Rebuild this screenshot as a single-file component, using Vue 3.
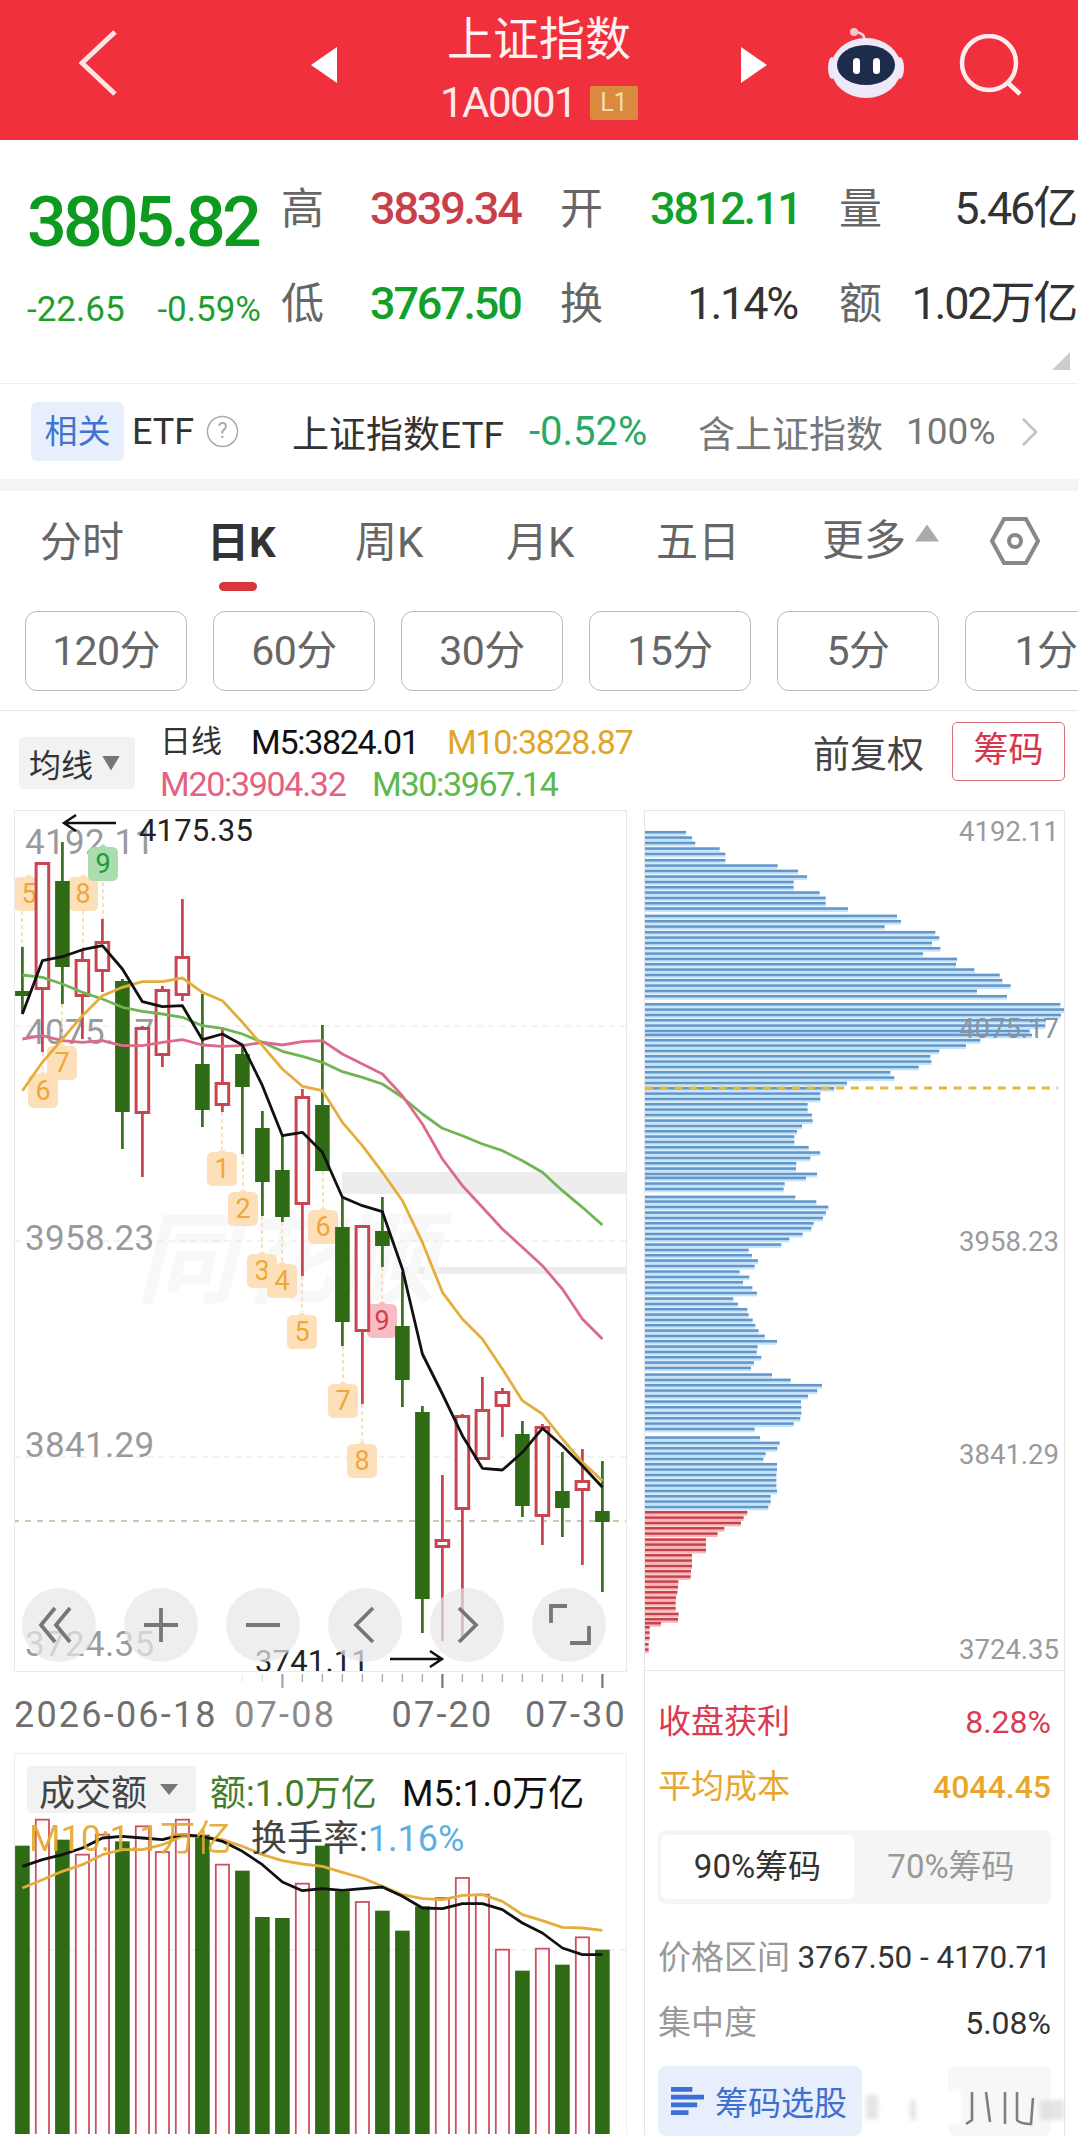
<script setup>
const toX = (i) => 22.4 + 20 * i
const poly = (ys) => ys.map((y, i) => `${toX(i)},${(800 + y / 3).toFixed(1)}`).join(' ')
const volPoly = (ys) => ys.map((y, i) => `${toX(i)},${(1740 + y / 3).toFixed(1)}`).join(' ')

const candles = [
  ['g', 948, 1015, 992, 997], ['r', 863, 1053, 863, 991], ['g', 843, 1005, 882, 968],
  ['r', 950, 1040, 960, 998], ['r', 920, 993, 942, 973], ['g', 980, 1150, 982, 1113],
  ['r', 1027, 1178, 1028, 1115], ['r', 987, 1068, 990, 1057], ['r', 900, 1002, 957, 997],
  ['g', 995, 1128, 1065, 1111], ['r', 1030, 1113, 1083, 1107], ['g', 1047, 1155, 1055, 1088],
  ['g', 1112, 1217, 1129, 1183], ['g', 1137, 1223, 1171, 1218], ['r', 1090, 1277, 1097, 1206],
  ['g', 1026, 1172, 1106, 1172], ['g', 1197, 1347, 1228, 1323], ['r', 1226, 1405, 1226, 1333],
  ['g', 1198, 1268, 1232, 1247], ['g', 1273, 1408, 1327, 1381], ['g', 1407, 1634, 1413, 1600],
  ['r', 1476, 1642, 1540, 1549], ['r', 1415, 1638, 1416, 1511], ['r', 1378, 1460, 1410, 1461],
  ['r', 1389, 1438, 1392, 1408], ['g', 1422, 1518, 1435, 1507], ['r', 1425, 1546, 1427, 1518],
  ['g', 1453, 1538, 1492, 1509], ['r', 1450, 1566, 1481, 1492], ['g', 1462, 1593, 1512, 1523]
].map((c, i) => ({ t: c[0], x: toX(i), wt: c[1], wb: c[2], bt: c[3], bb: c[4] }))

const m5 = poly([645,485,473,452,440,510,608,623,620,722,705,738,860,1010,1000,1060,1195,1220,1238,1410,1665,1785,1910,2008,2013,1960,1888,1940,2000,2065])
const m10 = poly([875,790,720,650,590,565,548,548,537,580,605,670,740,810,862,875,970,1040,1120,1205,1330,1480,1560,1620,1710,1805,1845,1920,1990,2045])
const m20 = poly([720,710,725,730,725,740,740,730,722,738,742,740,730,738,728,725,765,795,825,890,975,1080,1160,1225,1290,1345,1400,1470,1560,1620])
const m30 = poly([528,535,555,580,600,625,637,645,655,680,688,705,730,757,772,790,818,835,855,895,945,988,1010,1035,1055,1085,1120,1175,1225,1278])

const axisLabels = [
  ['4192.11', 855], ['4075.17', 1045], ['3958.23', 1251], ['3841.29', 1458]
]
const grids = [1027, 1242, 1458]

const badges = [
  ['5', 29, 875, 'o'], ['8', 83, 875, 'o'], ['9', 103, 845, 'g'], ['7', 62, 1044, 'o'], ['6', 43, 1072, 'o'],
  ['1', 222, 1150, 'o'], ['2', 243, 1190, 'o'], ['3', 262, 1252, 'o'], ['4', 282, 1262, 'o'], ['6', 323, 1208, 'o'],
  ['5', 302, 1313, 'o'], ['7', 343, 1382, 'o'], ['8', 362, 1442, 'o'], ['9', 382, 1302, 'r']
].map((b) => ({ n: b[0], x: b[1], y: b[2], k: b[3] }))

const links = [
  [22, 912, 948], [43, 1053, 1072], [62, 1005, 1045], [83, 912, 950], [103, 883, 920],
  [222, 1113, 1150], [243, 1155, 1190], [262, 1217, 1252], [282, 1223, 1262], [302, 1277, 1313],
  [323, 1172, 1208], [343, 1347, 1382], [362, 1405, 1442], [382, 1268, 1302]
]

const ticks = Array.from({ length: 19 }, (_, i) => 11 + i).map((i) => ({
  x: toX(i), major: i === 13 || i === 21 || i === 29, o: i < 14 ? 0.25 + (i - 11) * 0.2 : 1
}))

const volTops = [323,245,305,350,290,310,265,342,245,290,380,398,537,540,437,323,460,492,518,578,505,480,420,470,635,698,632,680,598,635]
const volType = ['g','r','g','r','r','g','r','r','r','g','r','g','g','g','r','g','g','r','g','g','g','r','r','r','r','g','r','g','r','g']
const vols = volTops.map((y, i) => ({ x: toX(i), y: 1740 + y / 3, t: volType[i] }))
const vm5 = volPoly([385,365,350,330,300,295,300,305,290,295,310,340,380,432,458,452,457,452,447,475,510,512,497,497,515,555,585,630,650,650])
const vm10 = volPoly([450,425,400,380,350,335,335,320,295,295,305,325,350,368,378,385,403,420,445,470,482,485,472,470,490,530,548,568,570,577])

const z6 = [[100,167],[116,185],[132,195],[149,268],[165,285],[184,285],[200,442],[216,503],[233,530],[249,490],[265,490],[281,568],[297,586],[313,586],[329,653],[351,800],[367,812],[383,763],[400,915],[416,927],[432,905],[448,930],[464,878],[480,980],[496,977],[512,1032],[528,1108],[544,1116],[560,1141],[576,1040],[592,1130],[616,1290],[632,1302],[648,1292],[664,1247],[680,1245],[696,1198],[708,1205],[724,1050],[740,1007],[756,927],[772,900],[788,903],[804,865],[820,780],[836,792],[852,650],[868,612],[884,570],[900,570],[916,532],[932,532],[948,545],[965,547],[981,515],[997,500],[1013,492],[1029,492],[1045,535],[1061,570],[1077,540],[1093,498],[1109,497],[1125,560],[1137,527],[1154,463],[1170,460],[1194,495],[1208,558],[1224,594],[1241,587],[1257,578],[1273,550],[1288,543],[1305,517],[1320,477]]
const z7 = [[17,453],[33,355],[49,365],[65,383],[81,373],[98,328],[114,357],[130,338],[146,366],[162,380],[179,309],[195,323],[211,351],[227,355],[243,367],[259,375],[275,385],[291,403],[307,440],[323,382],[339,379],[355,393],[371,371],[387,362],[407,425],[423,481],[439,575],[455,561],[471,533],[488,512],[505,513],[522,513],[538,510],[554,490],[570,373],[596,389],[612,448],[628,441],[644,406],[660,399],[676,440],[692,440],[708,438],[724,438],[740,438],[756,440],[772,421],[788,421],[804,414]]
const z7r = [[820,351],[836,340],[852,332],[868,282],[884,262],[902,227],[917,227],[933,227],[949,185],[965,185],[981,185],[997,182],[1013,181],[1028,144],[1044,143],[1060,141],[1076,137],[1092,136],[1108,136],[1125,145],[1141,143],[1153,92],[1165,58],[1181,58],[1197,58],[1216,55],[1232,55]]
const blueBars = [
  ...z6.map(([y, e]) => ({ y: 800 + y / 3, w: (e - 44) / 3 })),
  ...z7.map(([y, e]) => ({ y: 1240 + y / 3, w: (e - 44) / 3 }))
]
const redBars = z7r.map(([y, e]) => ({ y: 1240 + y / 3, w: (e - 44) / 3 }))
const chipLabels = [['4192.11', 842], ['3958.23', 1252], ['3841.29', 1465], ['3724.35', 1660]]
const tabs = ['分时', '日K', '周K', '月K', '五日']
const periods = ['120分', '60分', '30分', '15分', '5分', '1分']
</script>

<template>
  <div class="page">
    <header class="topbar">
      <svg class="ic-back" viewBox="0 0 38 66"><path d="M36 2 L3 33 L36 64" /></svg>
      <svg class="ic-tri ic-left" viewBox="0 0 26 36"><path d="M26 0 V36 L0 18 Z" /></svg>
      <div class="title-box">
        <div class="title">上证指数</div>
        <div class="subline"><span class="code">1A0001</span><span class="lv">L1</span></div>
      </div>
      <svg class="ic-tri ic-right" viewBox="0 0 26 36"><path d="M0 0 V36 L26 18 Z" /></svg>
      <svg class="ic-bot" viewBox="0 0 76 72">
        <path d="M36 12 C37 7 30 5 27 5" fill="none" stroke="#f6d5dd" stroke-width="2.5" />
        <circle cx="26" cy="5" r="4" fill="#f8c7c9" />
        <ellipse cx="4" cy="41" rx="4" ry="11" fill="#f3e5f3" />
        <ellipse cx="72" cy="41" rx="4" ry="11" fill="#f3e5f3" />
        <ellipse cx="38" cy="41" rx="35" ry="30" fill="#eee9f8" />
        <ellipse cx="38" cy="38" rx="29" ry="20" fill="#1d2c4d" />
        <rect x="25" y="31" width="7" height="16" rx="3.5" fill="#fff" />
        <rect x="45" y="31" width="7" height="16" rx="3.5" fill="#fff" />
      </svg>
      <svg class="ic-search" viewBox="0 0 64 62">
        <circle cx="30" cy="29" r="27" />
        <path d="M49 49 L61 60" />
      </svg>
    </header>

    <section class="quote">
      <div class="q-left">
        <div class="price">3805.82</div>
        <div class="change"><span>-22.65</span><span>-0.59%</span></div>
      </div>
      <div class="q-grid">
        <span class="lab">高</span><span class="val red">3839.34</span>
        <span class="lab">开</span><span class="val green end4">3812.11</span>
        <span class="lab">量</span><span class="val dark end">5.46亿</span>
        <span class="lab">低</span><span class="val green">3767.50</span>
        <span class="lab">换</span><span class="val dark end4">1.14%</span>
        <span class="lab">额</span><span class="val dark end">1.02万亿</span>
      </div>
      <i class="fold"></i>
    </section>

    <section class="etf">
      <span class="etf-tag">相关</span>
      <span class="etf-word">ETF</span>
      <svg class="ic-help" viewBox="0 0 34 34">
        <circle cx="17" cy="17" r="15.5" />
        <text x="17" y="24" text-anchor="middle">?</text>
      </svg>
      <span class="etf-name">上证指数ETF</span>
      <span class="etf-pct">-0.52%</span>
      <span class="etf-hold">含上证指数</span>
      <span class="etf-hold">100%</span>
      <svg class="ic-more" viewBox="0 0 18 32"><path d="M2 2 L16 16 L2 30" /></svg>
    </section>
    <div class="band"></div>

    <nav class="tabs">
      <span v-for="(t, i) in tabs" :key="t" class="tab" :class="{ on: i === 1 }">{{ t }}</span>
      <span class="tab more">更多<i class="more-tri"></i></span>
      <svg class="ic-hex" viewBox="0 0 50 48">
        <path d="M14 2 H36 L48 24 L36 46 H14 L2 24 Z" />
        <circle cx="25" cy="24" r="6" />
      </svg>
    </nav>

    <div class="periods">
      <span v-for="p in periods" :key="p" class="period">{{ p }}</span>
    </div>

    <div class="ma">
      <span class="ma-btn">均线<i class="dn"></i></span>
      <div class="ma-text">
        <div class="ma-line">
          <span class="ma-day">日线</span><span class="m-a">M5:3824.01</span><span class="m-b">M10:3828.87</span>
        </div>
        <div class="ma-line">
          <span class="m-c">M20:3904.32</span><span class="m-d">M30:3967.14</span>
        </div>
      </div>
      <span class="adjust">前复权</span>
      <span class="chip-btn">筹码</span>
    </div>

    <div class="charts">
      <div class="left-col">
        <div class="kbox">
          <svg class="ksvg" viewBox="15 812 611 860">
            <rect x="342" y="1173" width="285" height="22" fill="#ededed" />
            <rect x="404" y="1268" width="223" height="7" fill="#ededed" />
            <text x="136" y="1296" class="wm">同花顺</text>
            <line v-for="g in grids" :key="g" x1="15" x2="626" :y1="g" :y2="g" class="grid" />
            <text v-for="a in axisLabels" :key="a[0]" x="25" :y="a[1]" class="axis">{{ a[0] }}</text>
            <text x="25" y="1657" class="axis">3724.35</text>
            <line x1="13" x2="627" y1="1522" y2="1522" class="now" />
            <line v-for="l in links" :key="l[0]" :x1="l[0]" :x2="l[0]" :y1="l[1]" :y2="l[2]" class="link" />
            <g v-for="(b, i) in badges" :key="i" :class="'bd-' + b.k">
              <path :d="`M${b.x - 15} ${b.y + 9} q0 -6 6 -6 h5 l4 -3 l4 3 h5 q6 0 6 6 v22 q0 6 -6 6 h-18 q-6 0 -6 -6 z`" />
              <text :x="b.x" :y="b.y + 29" text-anchor="middle">{{ b.n }}</text>
            </g>
            <g v-for="(c, i) in candles" :key="i">
              <template v-if="c.t === 'g'">
                <line :x1="c.x" :x2="c.x" :y1="c.wt" :y2="c.wb" class="wick-g" />
                <rect :x="c.x - 7.3" :y="c.bt" width="14.6" :height="c.bb - c.bt" fill="#2f6a14" />
              </template>
              <template v-else>
                <line :x1="c.x" :x2="c.x" :y1="c.wt" :y2="c.bt" class="wick-r" />
                <line :x1="c.x" :x2="c.x" :y1="c.bb" :y2="c.wb" class="wick-r" />
                <rect :x="c.x - 6.3" :y="c.bt + 1.5" width="12.6" :height="c.bb - c.bt - 3" class="body-r" />
              </template>
            </g>
            <polyline :points="m30" class="l" stroke="#6fb552" />
            <polyline :points="m20" class="l" stroke="#dd6a8a" />
            <polyline :points="m10" class="l" stroke="#e5ae3c" />
            <polyline :points="m5" class="l" stroke="#111" />
            <text x="139" y="842" class="note">4175.35</text>
            <path d="M116 824 H65 M76 816 L64 824 L76 832" class="arrow" />
            <text x="255" y="1673" class="note">3741.11</text>
            <path d="M390 1660 H441 M430 1652 L442 1660 L430 1668" class="arrow" />
          </svg>
          <div class="zoombar">
            <span class="zb"><svg viewBox="0 0 74 74"><path d="M33 20 L19 37 L33 54 M48 20 L34 37 L48 54" /></svg></span>
            <span class="zb"><svg viewBox="0 0 74 74"><path d="M20 37 H54 M37 20 V54" /></svg></span>
            <span class="zb"><svg viewBox="0 0 74 74"><path d="M20 37 H54" /></svg></span>
            <span class="zb"><svg viewBox="0 0 74 74"><path d="M45 20 L28 37 L45 54" /></svg></span>
            <span class="zb"><svg viewBox="0 0 74 74"><path d="M29 20 L46 37 L29 54" /></svg></span>
            <span class="zb"><svg viewBox="0 0 74 74"><path d="M35 18 H19 V35 M57 38 V55 H38" /></svg></span>
          </div>
        </div>
        <div class="timeaxis">
          <svg class="ticks" viewBox="14 1673 613 20">
            <line v-for="t in ticks" :key="t.x" :x1="t.x" :x2="t.x" y1="1675" :y2="t.major ? 1689 : 1683"
              :stroke-opacity="t.o" :class="t.major ? 'tk-major' : 'tk'" />
          </svg>
          <div class="dates">
            <span class="d1">2026-06-18</span><span class="d2">07-08</span><span class="d3">07-20</span><span>07-30</span>
          </div>
        </div>
        <div class="volbox">
          <svg class="vsvg" viewBox="15 1756 611 380">
            <line x1="15" x2="626" y1="1952" y2="1952" class="grid" />
            <g v-for="(v, i) in vols" :key="i">
              <rect v-if="v.t === 'g'" :x="v.x - 7.3" :y="v.y" width="14.6" :height="2136 - v.y + 4" fill="#2f6a14" />
              <rect v-else :x="v.x - 6.6" :y="v.y" width="13.2" :height="2136 - v.y + 4" class="vol-r" />
            </g>
            <polyline :points="vm10" class="l" stroke="#e5ae3c" />
            <polyline :points="vm5" class="l" stroke="#111" />
          </svg>
          <div class="vol-legend">
            <div class="vl1">
              <span class="vol-btn">成交额<i class="dn2"></i></span>
              <span class="v-g">额:1.0万亿</span>
              <span class="v-k">M5:1.0万亿</span>
            </div>
            <div class="vl2">
              <span class="v-o">M10:1.1万亿</span>
              <span class="v-t">换手率:<b>1.16%</b></span>
            </div>
          </div>
        </div>
      </div>

      <div class="right-col">
        <div class="chipbox">
          <svg class="ksvg" viewBox="645 812 419 859">
            <g v-for="(b, i) in blueBars" :key="'b' + i">
              <rect x="645" :y="b.y + 1" :width="b.w" height="2.4" fill="#c3e5fb" />
              <rect x="645" :y="b.y - 1.4" :width="b.w" height="2.6" fill="#6496ca" />
            </g>
            <g v-for="(b, i) in redBars" :key="'r' + i">
              <rect x="645" :y="b.y + 1" :width="b.w" height="2.4" fill="#fbb6b6" />
              <rect x="645" :y="b.y - 1.4" :width="b.w" height="2.6" fill="#c8424e" />
            </g>
            <line x1="645" x2="1058" y1="1089" y2="1089" class="avg" />
            <text x="1059" y="1039" text-anchor="end" class="chip-axis faint">4075.17</text>
            <text v-for="c in chipLabels" :key="c[0]" x="1059" :y="c[1]" text-anchor="end" class="chip-axis">{{ c[0] }}</text>
          </svg>
        </div>
        <div class="info">
          <div class="row rose"><span>收盘获利</span><span class="n">8.28%</span></div>
          <div class="row amber"><span>平均成本</span><span class="n w5">4044.45</span></div>
          <div class="seg">
            <span class="seg-on">90%筹码</span>
            <span class="seg-off">70%筹码</span>
          </div>
          <div class="row r3"><span class="mute">价格区间</span><span class="n dk">3767.50 - 4170.71</span></div>
          <div class="row"><span class="mute">集中度</span><span class="n dk">5.08%</span></div>
          <div class="bottom-btns">
            <span class="pick">
              <svg viewBox="0 0 34 30"><path d="M0 3 H22 M0 11 H34 M0 19 H27 M0 27 H18" /></svg>
              筹码选股
            </span>
            <span class="pick2"></span>
          </div>
        </div>
      </div>
    </div>

    <svg class="stamp" viewBox="860 2060 218 76">
      <defs><filter id="soft"><feGaussianBlur stdDeviation="2" /></filter></defs>
      <g filter="url(#soft)" fill="#fff">
        <rect x="864" y="2090" width="24" height="34" rx="8" />
        <rect x="908" y="2090" width="24" height="34" />
        <rect x="935" y="2090" width="26" height="34" />
      </g>
      <g filter="url(#soft)" fill="#d9d9d9" opacity=".7">
        <rect x="866" y="2095" width="12" height="24" />
        <rect x="910" y="2100" width="6" height="20" />
        <rect x="1040" y="2100" width="24" height="20" />
      </g>
      <g class="stamp-ink">
        <path d="M972 2092 V2120 L966 2124" />
        <path d="M986 2092 L990 2122" />
        <path d="M1005 2092 V2124" />
        <path d="M1017 2092 V2120 Q1020 2124 1031 2124 L1033 2098" />
      </g>
    </svg>
  </div>
</template>

<style>
html, body { margin: 0; background: #fff; }
</style>

<style scoped>
.page {
  position: relative;
  width: 1078px;
  height: 2136px;
  overflow: hidden;
  background: #fff;
  font-family: Roboto, "Noto Sans CJK SC", sans-serif;
  color: #333;
}
i { display: block; font-style: normal; }

.topbar { display: flex; height: 140px; background: #f0303d; align-items: flex-start; }
.ic-back { width: 38px; height: 66px; margin: 30px 0 0 79px; flex: none; }
.ic-back path { fill: none; stroke: #ffe3e3; stroke-width: 5; }
.ic-tri { width: 26px; height: 36px; margin-top: 47px; flex: none; }
.ic-tri path { fill: #fff; }
.ic-left { margin-left: 194px; }
.title-box { width: 404px; flex: none; text-align: center; color: #fff; padding-top: 9px; }
.title { font-size: 46px; line-height: 52px; font-family: "Noto Sans CJK SC", sans-serif; color: #fff2f2; }
.subline { display: flex; justify-content: center; align-items: center; margin-top: 25px; height: 34px; gap: 14px; }
.code { font-size: 42px; letter-spacing: -1.6px; color: #ffeaea; line-height: 34px; }
.lv { width: 48px; height: 34px; line-height: 34px; background: #d98a3e; color: #f9dab1; font-size: 25px; border-radius: 2px; }
.ic-bot { width: 76px; height: 72px; margin: 27px 0 0 61px; flex: none; }
.ic-search { width: 64px; height: 62px; margin: 34px 0 0 55px; flex: none; }
.ic-search circle, .ic-search path { fill: none; stroke: #ffecec; stroke-width: 4.5; }

.quote { position: relative; display: flex; height: 244px; padding-left: 27px; box-sizing: border-box; border-bottom: 1px solid #eee; }
.q-left { width: 254px; flex: none; }
.price { margin-top: 47px; font-size: 70px; line-height: 70px; font-weight: 500; letter-spacing: -3.9px; color: #0e9a1f; white-space: nowrap; }
.change { display: flex; justify-content: space-between; margin-top: 33px; width: 234px; font-size: 35px; line-height: 40px; color: #1f9e2e; }
.q-grid {
  display: grid;
  grid-template-columns: 89px 190px 90px 189px 68px 169px;
  grid-auto-rows: 60px;
  row-gap: 35px;
  padding-top: 37px;
  align-items: start;
}
.lab { font-size: 43px; line-height: 56px; color: #666; font-family: "Noto Sans CJK SC", sans-serif; }
.val { font-size: 45px; line-height: 60px; padding-top: 2px; letter-spacing: -2.2px; white-space: nowrap; }
.val.red { color: #c9404a; font-weight: 500; }
.val.green { color: #11a02a; font-weight: 500; }
.val.dark { color: #333; }
.end { text-align: right; }
.end4 { text-align: right; padding-right: 42px; }
.fold { position: absolute; right: 8px; bottom: 13px; width: 18px; height: 18px; background: #ccc; clip-path: polygon(100% 0, 100% 100%, 0 100%); }

.etf {
  display: grid;
  grid-template-columns: 101px 74px 86px 237px 169px 208px 115px auto;
  align-items: center;
  height: 95px;
  padding-left: 31px;
}
.etf-tag { width: 93px; height: 59px; line-height: 59px; text-align: center; background: #e8effc; color: #3f74cf; font-size: 33px; border-radius: 6px; }
.etf-word { font-size: 36px; color: #333; }
.ic-help { width: 33px; height: 33px; }
.ic-help circle { fill: none; stroke: #aaa; stroke-width: 1.5; }
.ic-help text { font-size: 22px; fill: #aaa; }
.etf-name { font-size: 37px; color: #333; white-space: nowrap; }
.etf-pct { font-size: 40px; color: #2aa866; white-space: nowrap; }
.etf-hold { font-size: 37px; color: #777; white-space: nowrap; }
.ic-more { width: 17px; height: 32px; }
.ic-more path { fill: none; stroke: #c4c4c4; stroke-width: 3; }
.band { height: 12px; background: #f5f5f5; }

.tabs {
  display: grid;
  grid-template-columns: 167px 148px 151px 150px 166px 168px auto;
  height: 108px;
  padding-left: 40px;
  box-sizing: border-box;
}
.tab { position: relative; font-size: 42px; line-height: 104px; height: 100px; color: #666; white-space: nowrap; }
.tab.on { color: #333; font-weight: 700; }
.tab.on::after { content: ""; position: absolute; left: 12px; top: 91px; width: 38px; height: 9px; border-radius: 5px; background: #d9363e; }
.more { display: flex; align-items: center; }
.more-tri { width: 24px; height: 17px; margin: -16px 0 0 9px; background: #aaa; clip-path: polygon(50% 0, 100% 100%, 0 100%); }
.ic-hex { width: 50px; height: 48px; margin-top: 26px; }
.ic-hex path, .ic-hex circle { fill: none; stroke: #888; stroke-width: 4; }

.periods { display: flex; gap: 26px; height: 112px; padding: 12px 0 0 25px; box-sizing: border-box; border-bottom: 1px solid #e8e8e8; overflow: hidden; }
.period { flex: none; width: 162px; height: 80px; line-height: 78px; text-align: center; box-sizing: border-box; border: 1.5px solid #bbb; border-radius: 12px; font-size: 41px; color: #666; letter-spacing: -.6px; }

.ma { display: flex; height: 99px; padding-left: 19px; box-sizing: border-box; align-items: flex-start; }
.ma-btn { display: flex; align-items: center; margin-top: 26px; width: 116px; height: 52px; padding-left: 10px; box-sizing: border-box; background: #f2f2f2; border-radius: 4px; font-size: 32px; color: #333; flex: none; }
.dn { width: 18px; height: 15px; margin-left: 9px; background: #777; clip-path: polygon(0 0, 100% 0, 50% 100%); }
.ma-text { margin: 10px 0 0 25px; width: 500px; font-size: 34px; letter-spacing: -1.3px; }
.ma-line { display: flex; height: 42px; line-height: 42px; white-space: nowrap; }
.ma-day { width: 91px; font-size: 31px; letter-spacing: 0; color: #333; }
.m-a { width: 196px; color: #111; }
.m-b { color: #e0a62a; }
.m-c { width: 212px; color: #e2627f; }
.m-d { color: #5db84d; }
.adjust { margin: 23px 0 0 153px; font-size: 37px; line-height: 44px; color: #444; white-space: nowrap; }
.chip-btn { margin: 11px 0 0 28px; width: 113px; height: 59px; box-sizing: border-box; line-height: 55px; text-align: center; border: 1.5px solid #d8707c; border-radius: 5px; font-size: 35px; color: #d8344b; flex: none; }

.charts { display: flex; padding-left: 14px; }
.left-col { width: 613px; flex: none; }
.kbox { position: relative; height: 862px; box-sizing: border-box; border: 1px solid #e9e9e9; }
.ksvg { display: block; width: 100%; height: 100%; overflow: hidden; }
.wm { font-size: 100px; font-weight: 700; font-style: italic; fill: #f8f8f8; font-family: "Noto Sans CJK SC", sans-serif; }
.grid { stroke: #e6e6e6; stroke-width: 1; stroke-dasharray: 6 5; }
.axis { font-size: 35px; fill: #9a9a9e; letter-spacing: .3px; }
.now { stroke: #b8b893; stroke-width: 1.5; stroke-dasharray: 6 6; }
.link { stroke: #f5d6a8; stroke-width: 1.5; stroke-dasharray: 4 3; }
.bd-o path { fill: #fde0b9; }
.bd-o text { fill: #eda838; font-size: 27px; }
.bd-g path { fill: #abdcae; }
.bd-g text { fill: #1a9a3a; font-size: 27px; }
.bd-r path { fill: #f8bcc3; }
.bd-r text { fill: #d83a4a; font-size: 27px; }
.wick-g { stroke: #3a7321; stroke-width: 2.8; }
.wick-r { stroke: #c9454f; stroke-width: 2.8; }
.body-r { fill: #fff; stroke: #c9454f; stroke-width: 3; }
.l { fill: none; stroke-width: 2.8; stroke-linejoin: round; }
.note { font-size: 31px; fill: #222; letter-spacing: .2px; }
.arrow { fill: none; stroke: #111; stroke-width: 2.5; }
.zoombar { position: absolute; left: 7px; bottom: 9px; display: flex; gap: 28px; }
.zb { width: 74px; height: 74px; border-radius: 50%; background: rgba(232, 232, 232, .72); }
.zb svg { display: block; width: 74px; height: 74px; }
.zb path { fill: none; stroke: #777; stroke-width: 3.8; }

.timeaxis { height: 81px; }
.ticks { display: block; width: 613px; height: 20px; }
.tk { stroke: #aaa; stroke-width: 1.3; }
.tk-major { stroke: #777; stroke-width: 2.2; }
.dates { display: flex; height: 40px; margin-top: 3px; font-size: 36px; line-height: 40px; color: #6f6f6f; letter-spacing: 2.2px; white-space: nowrap; }
.d1 { width: 221px; }
.d2 { width: 158px; color: #8a8a8a; }
.d3 { width: 134px; }

.volbox { position: relative; height: 381px; box-sizing: border-box; border: 1px solid #eee; border-bottom: 0; }
.vsvg { display: block; width: 100%; height: 100%; }
.vol-r { fill: #fff; stroke: #cf5060; stroke-width: 1.8; }
.vol-legend { position: absolute; left: 12px; top: 12px; right: 0; font-size: 36px; white-space: nowrap; }
.vl1 { display: flex; align-items: center; height: 47px; }
.vol-btn { display: flex; align-items: center; width: 169px; height: 47px; padding-left: 12px; box-sizing: border-box; background: #f2f2f2; border-radius: 4px; color: #444; flex: none; }
.dn2 { width: 18px; height: 11px; margin-left: 13px; background: #777; clip-path: polygon(0 0, 100% 0, 50% 100%); }
.v-g { width: 192px; margin-left: 14px; color: #3f7e2b; }
.v-k { color: #111; }
.vl2 { display: flex; height: 40px; line-height: 40px; margin-top: 6px; padding-left: 2px; }
.v-o { width: 222px; color: #e5a92f; opacity: .92; }
.v-t { color: #444; }
.v-t b { font-weight: 400; color: #5fb0e0; }

.right-col { width: 421px; margin-left: 17px; flex: none; }
.chipbox { height: 861px; box-sizing: border-box; border: 1px solid #e6e6e6; }
.avg { stroke: #e8b83a; stroke-width: 3; stroke-dasharray: 8 6.7; }
.chip-axis { font-size: 27.5px; fill: #9a9a9e; }
.chip-axis.faint { fill: #8a93a0; }

.info { height: 464px; box-sizing: border-box; padding: 29px 13px 0; border-left: 1px solid #e6e6e6; border-right: 1px solid #e6e6e6; }
.row { display: flex; justify-content: space-between; height: 44px; line-height: 44px; margin-bottom: 21px; font-size: 33px; white-space: nowrap; }
.n { font-size: 32px; }
.w5 { font-weight: 500; font-size: 32px; }
.rose { color: #d93b50; }
.amber { color: #e9a62e; }
.mute { color: #999; }
.dk { color: #333; }
.seg { display: flex; height: 74px; margin-top: 5px; padding: 5px 3px; box-sizing: border-box; background: #f5f5f5; border-radius: 8px; font-size: 33px; line-height: 64px; }
.seg-on { width: 193px; text-align: center; background: #fff; border-radius: 6px; color: #333; }
.seg-off { flex: 1; text-align: center; color: #999; }
.r3 { margin-top: 32px; }
.r3 .n { font-size: 31.5px; }
.bottom-btns { display: flex; justify-content: space-between; margin-top: 18px; }
.pick { display: flex; align-items: center; width: 204px; height: 70px; padding-left: 13px; box-sizing: border-box; background: #e8effc; border-radius: 8px; color: #3f6fd0; font-size: 33px; gap: 11px; }
.pick svg { width: 33px; height: 30px; flex: none; }
.pick path { fill: none; stroke: #3f6fd0; stroke-width: 5; }
.pick2 { width: 103px; height: 70px; background: #f7f7f7; border-radius: 8px; }

.stamp { position: absolute; left: 860px; top: 2060px; width: 218px; height: 76px; }
.stamp-ink path { fill: none; stroke: #555; stroke-width: 2.6; opacity: .75; }
</style>
